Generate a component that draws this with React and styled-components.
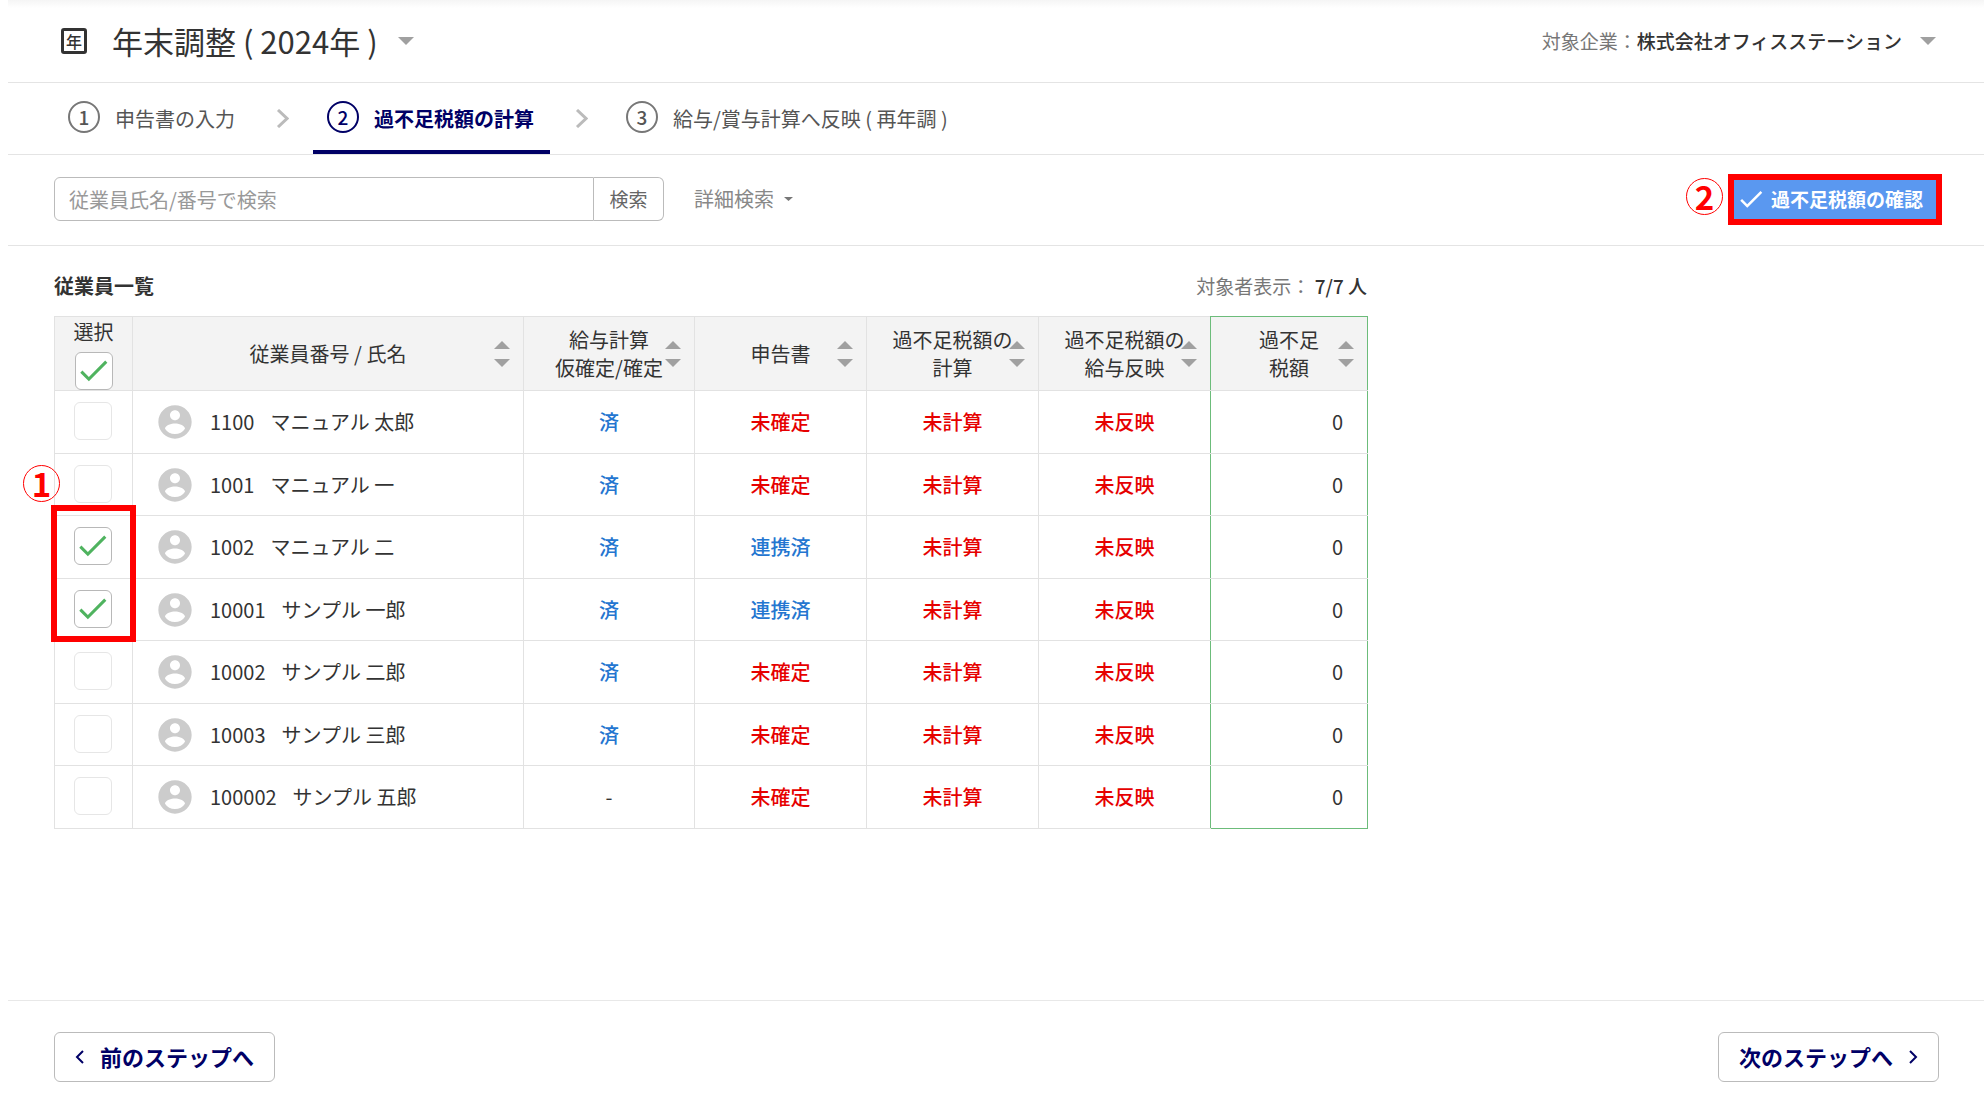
import React, { useState } from "react";
import styled, { createGlobalStyle } from "styled-components";

const GlobalStyle = createGlobalStyle`
  * { box-sizing: border-box; }
  body {
    margin: 0;
    background: #fff;
    color: #333;
    font-family: "Noto Sans CJK JP", "Noto Sans", sans-serif;
    font-size: 20px;
    line-height: 28px;
  }
  button, input { font: inherit; color: inherit; }
`;

const Page = styled.div`
  display: flex;
  flex-direction: column;
  min-height: 100vh;
  padding-left: 8px;
`;

const Header = styled.header`
  display: flex;
  align-items: center;
  justify-content: space-between;
  height: 83px;
  padding: 0 42px 0 46px;
  border-bottom: 1px solid #e4e4e4;
  background: linear-gradient(#f5f5f5, #fff 8px);
`;

const PlainButton = styled.button`
  display: flex;
  align-items: center;
  padding: 0;
  border: 0;
  background: none;
  cursor: pointer;
`;

const TitleGroup = styled.div`
  display: flex;
  align-items: center;
  padding-left: 7px;
  gap: 25px;
`;

const YearIcon = styled.span`
  display: flex;
  align-items: center;
  justify-content: center;
  width: 26px;
  height: 26px;
  border: 3px solid #333;
  border-radius: 3px;
  font-size: 16px;
  font-weight: 500;
  line-height: 20px;
`;

const Title = styled.h1`
  margin: 0;
  font-size: 31px;
  font-weight: 400;
  line-height: 44px;
`;

const TitleButton = styled(PlainButton)`
  gap: 20px;
`;

const CompanyButton = styled(PlainButton)`
  gap: 18px;
  padding-right: 6px;
  font-size: 19px;
`;

const Muted = styled.span`
  color: #777;
`;

const Medium = styled.span`
  font-weight: 500;
`;

const Steps = styled.nav`
  display: flex;
  align-items: stretch;
  height: 72px;
  padding-left: 46px;
  border-bottom: 1px solid #e4e4e4;
`;

const Step = styled(PlainButton)`
  gap: 15px;
  padding: 4px 16px 0 14px;
  border-bottom: 4px solid ${(p) => (p.$active ? "#000066" : "transparent")};
  color: ${(p) => (p.$active ? "#000066" : "#555")};
  font-weight: ${(p) => (p.$active ? 700 : 400)};
`;

const StepNumber = styled.span`
  display: flex;
  align-items: center;
  justify-content: center;
  width: 32px;
  height: 32px;
  margin-bottom: 4px;
  border: 2px solid ${(p) => (p.$active ? "#000066" : "#777")};
  border-radius: 50%;
  font-size: 19px;
  font-weight: 500;
`;

const StepGap = styled.span`
  display: flex;
  align-items: center;
  justify-content: center;
  width: 62px;
`;

const SearchBar = styled.div`
  display: flex;
  align-items: center;
  justify-content: space-between;
  height: 91px;
  padding: 0 42px 2px 46px;
  border-bottom: 1px solid #e4e4e4;
`;

const SearchForm = styled.form`
  display: flex;
  align-items: center;
`;

const SearchInput = styled.input`
  width: 540px;
  height: 44px;
  padding: 0 14px;
  border: 1px solid #bbb;
  border-radius: 6px 0 0 6px;
  &::placeholder { color: #999; opacity: 1; }
`;

const SearchButton = styled.button`
  width: 70px;
  height: 44px;
  padding: 0;
  border: 1px solid #bbb;
  border-left: 0;
  border-radius: 0 6px 6px 0;
  background: #fff;
  color: #666;
  font-size: 19px;
`;

const DetailButton = styled(PlainButton)`
  gap: 10px;
  margin-left: 30px;
  color: #888;
`;

const Confirm = styled.div`
  display: flex;
  align-items: center;
  gap: 5px;
`;

const Badge = styled.span`
  display: flex;
  align-items: center;
  justify-content: center;
  width: 37px;
  height: 37px;
  margin-bottom: 5px;
  border: 1px solid #f00;
  border-radius: 50%;
  color: #f00;
  font-size: 33px;
  font-weight: 700;
  line-height: 33px;
`;

const ConfirmButton = styled.button`
  display: flex;
  align-items: center;
  gap: 5px;
  height: 51px;
  padding: 0 13px 0 2px;
  border: 6px solid #f00;
  background: #5a98f0;
  color: #fff;
  font-size: 19px;
  font-weight: 700;
  white-space: nowrap;
`;

const Main = styled.main`
  flex: 1;
  padding: 26px 46px;
`;

const ListHeading = styled.div`
  display: flex;
  align-items: center;
  justify-content: space-between;
  width: 1313px;
  padding-bottom: 16px;
`;

const Heading = styled.h2`
  margin: 0;
  font-size: 20px;
  font-weight: 700;
`;

const Count = styled.div`
  font-size: 19px;
`;

const Table = styled.table`
  width: 1313px;
  table-layout: fixed;
  border-collapse: collapse;
`;

const Col = styled.col`
  width: ${(p) => p.$w}px;
`;

const GREEN_LINE = "#6cbc7a";

const HeadCell = styled.th`
  position: relative;
  height: 74px;
  padding: 0;
  border: 1px solid #e2e2e2;
  background: #f3f3f3;
  font-weight: 400;
  text-align: center;
  white-space: pre-line;
  &:nth-last-child(2) { border-right-color: ${GREEN_LINE}; }
  &:last-child {
    border-top-color: ${GREEN_LINE};
    border-left-color: ${GREEN_LINE};
    border-right-color: ${GREEN_LINE};
  }
`;

const SelectLabel = styled.label`
  display: flex;
  flex-direction: column;
  align-items: center;
  gap: 6px;
`;

const Sorter = styled.button`
  position: absolute;
  top: 0;
  bottom: 0;
  right: 13px;
  display: flex;
  align-items: center;
  padding: 0;
  border: 0;
  background: none;
`;

const Row = styled.tr`
  height: 63px;
  &:nth-child(even) { height: 62px; }
`;

const Cell = styled.td`
  position: relative;
  padding: 0;
  border: 1px solid #e2e2e2;
  text-align: center;
  color: ${(p) => p.$color || "#333"};
  font-weight: ${(p) => (p.$color ? 500 : 400)};
  &:nth-last-child(2) { border-right-color: ${GREEN_LINE}; }
`;

const AmountCell = styled(Cell)`
  padding-right: 24px;
  border-left-color: ${GREEN_LINE};
  border-right-color: ${GREEN_LINE};
  text-align: right;
  ${Row}:last-child & { border-bottom-color: ${GREEN_LINE}; }
`;

const Person = styled.div`
  display: flex;
  align-items: center;
  padding-left: 22px;
`;

const Code = styled.span`
  padding: 0 16px 0 15px;
`;

const CheckWrap = styled.span`
  position: relative;
  display: flex;
  width: 38px;
  height: 38px;
  svg {
    position: absolute;
    top: 0;
    left: 0;
    pointer-events: none;
  }
`;

const CheckCell = styled(Cell)`
  padding: 0 0 2px 19px;
`;

const CheckInput = styled.input`
  appearance: none;
  width: 38px;
  height: 38px;
  margin: 0;
  border: 1px solid #e6e6e6;
  border-radius: 6px;
  background: #fff;
  &:checked { border-color: #b8b8b8; }
`;

const Highlight = styled.div`
  position: absolute;
  z-index: 1;
  top: -11px;
  left: -4px;
  width: 85px;
  height: 137px;
  border: 6px solid #f00;
  pointer-events: none;
`;

const HighlightBadge = styled(Badge)`
  position: absolute;
  right: 70px;
  bottom: 129px;
`;

const Footer = styled.footer`
  display: flex;
  justify-content: space-between;
  padding: 31px 45px 25px 46px;
  border-top: 1px solid #e8e8e8;
`;

const StepButton = styled.button`
  display: flex;
  align-items: center;
  justify-content: center;
  gap: 15px;
  width: 221px;
  height: 50px;
  padding: 0 0 2px;
  border: 1px solid #bbb;
  border-radius: 6px;
  background: #fff;
  color: #000066;
  font-size: 22px;
  font-weight: 700;
  svg { margin-top: 2px; }
`;

const Triangle = ({ w = 16, h = 8, color = "#a0a0a0" }) => (
  <svg width={w} height={h} viewBox="0 0 16 8" preserveAspectRatio="none" fill={color} aria-hidden="true">
    <path d="M0 0h16L8 8z" />
  </svg>
);

const SortIcon = () => (
  <svg width="16" height="26" viewBox="0 0 16 26" fill="#a0a0a0" aria-hidden="true">
    <path d="M0 8h16L8 0zM0 18h16L8 26z" />
  </svg>
);

const CheckIcon = ({ size, color }) => (
  <svg width={size} height={size} viewBox="0 0 24 24" fill={color} aria-hidden="true">
    <path d="M9 16.17L4.83 12l-1.42 1.41L9 19 21 7l-1.41-1.41z" />
  </svg>
);

const Chevron = ({ w, h, color, left, stroke }) => (
  <svg width={w} height={h} viewBox={`0 0 ${w} ${h}`} fill="none" stroke={color} strokeWidth={stroke} aria-hidden="true">
    {left ? (
      <path d={`M${w - 2} 1L2 ${h / 2}L${w - 2} ${h - 1}`} />
    ) : (
      <path d={`M2 1L${w - 2} ${h / 2}L2 ${h - 1}`} />
    )}
  </svg>
);

const Avatar = () => (
  <svg width="40" height="40" viewBox="0 0 24 24" fill="#ccc" aria-hidden="true">
    <path d="M12 2C6.48 2 2 6.48 2 12s4.48 10 10 10 10-4.48 10-10S17.52 2 12 2zm0 3c1.66 0 3 1.34 3 3s-1.34 3-3 3-3-1.34-3-3 1.34-3 3-3zm0 14.2c-2.5 0-4.71-1.28-6-3.22.03-1.99 4-3.08 6-3.08 1.99 0 5.97 1.09 6 3.08-1.29 1.94-3.5 3.22-6 3.22z" />
  </svg>
);

const Check = ({ checked, onChange, id, label }) => (
  <CheckWrap>
    <CheckInput type="checkbox" id={id} checked={checked} onChange={onChange} aria-label={label} />
    {checked && <CheckIcon size={37} color="#4fb35f" />}
  </CheckWrap>
);

const BLUE = "#2476d0";
const RED = "#e60000";

const steps = ["申告書の入力", "過不足税額の計算", "給与/賞与計算へ反映 ( 再年調 )"];

const columns = [
  "従業員番号 / 氏名",
  "給与計算\n仮確定/確定",
  "申告書",
  "過不足税額の\n計算",
  "過不足税額の\n給与反映",
  "過不足\n税額",
];

const employees = [
  { code: "1100", name: "マニュアル 太郎", payroll: "済", report: "未確定" },
  { code: "1001", name: "マニュアル 一", payroll: "済", report: "未確定" },
  { code: "1002", name: "マニュアル 二", payroll: "済", report: "連携済" },
  { code: "10001", name: "サンプル 一郎", payroll: "済", report: "連携済" },
  { code: "10002", name: "サンプル 二郎", payroll: "済", report: "未確定" },
  { code: "10003", name: "サンプル 三郎", payroll: "済", report: "未確定" },
  { code: "100002", name: "サンプル 五郎", payroll: "-", report: "未確定" },
];

export default function App() {
  const [selected, setSelected] = useState(["1002", "10001"]);
  const [all, setAll] = useState(true);
  const toggle = (code) =>
    setSelected((s) => (s.includes(code) ? s.filter((c) => c !== code) : [...s, code]));

  return (
    <Page>
      <GlobalStyle />
      <Header>
        <TitleGroup>
          <YearIcon>年</YearIcon>
          <TitleButton type="button">
            <Title>年末調整 ( 2024年 )</Title>
            <Triangle />
          </TitleButton>
        </TitleGroup>
        <CompanyButton type="button">
          <span>
            <Muted>対象企業：</Muted>
            <Medium>株式会社オフィスステーション</Medium>
          </span>
          <Triangle />
        </CompanyButton>
      </Header>

      <Steps>
        {steps.map((label, i) => (
          <React.Fragment key={label}>
            {i > 0 && (
              <StepGap>
                <Chevron w={13} h={19} color="#bbb" stroke={3} />
              </StepGap>
            )}
            <Step type="button" $active={i === 1}>
              <StepNumber $active={i === 1}>{i + 1}</StepNumber>
              {label}
            </Step>
          </React.Fragment>
        ))}
      </Steps>

      <SearchBar>
        <SearchForm onSubmit={(e) => e.preventDefault()}>
          <SearchInput type="text" placeholder="従業員氏名/番号で検索" aria-label="従業員氏名/番号で検索" />
          <SearchButton type="submit">検索</SearchButton>
          <DetailButton type="button">
            詳細検索
            <Triangle w={9} h={4} color="#777" />
          </DetailButton>
        </SearchForm>
        <Confirm>
          <Badge>2</Badge>
          <ConfirmButton type="button">
            <CheckIcon size={30} color="#fff" />
            過不足税額の確認
          </ConfirmButton>
        </Confirm>
      </SearchBar>

      <Main>
        <ListHeading>
          <Heading>従業員一覧</Heading>
          <Count>
            <Muted>対象者表示：</Muted> <Medium>7/7 人</Medium>
          </Count>
        </ListHeading>
        <Table>
          <colgroup>
            <Col $w={78} />
            <Col $w={391} />
            <Col $w={171} />
            <Col $w={172} />
            <Col $w={172} />
            <Col $w={172} />
            <Col $w={157} />
          </colgroup>
          <thead>
            <tr>
              <HeadCell>
                <SelectLabel htmlFor="select-all">
                  選択
                  <Check id="select-all" checked={all} onChange={() => setAll(!all)} />
                </SelectLabel>
              </HeadCell>
              {columns.map((c) => (
                <HeadCell key={c}>
                  {c}
                  <Sorter type="button" aria-label="並べ替え">
                    <SortIcon />
                  </Sorter>
                </HeadCell>
              ))}
            </tr>
          </thead>
          <tbody>
            {employees.map((e) => (
              <Row key={e.code}>
                <CheckCell>
                  <Check label={e.name} checked={selected.includes(e.code)} onChange={() => toggle(e.code)} />
                  {e.code === "1002" && (
                    <Highlight>
                      <HighlightBadge>1</HighlightBadge>
                    </Highlight>
                  )}
                </CheckCell>
                <Cell>
                  <Person>
                    <Avatar />
                    <Code>{e.code}</Code>
                    {e.name}
                  </Person>
                </Cell>
                <Cell $color={e.payroll === "済" ? BLUE : undefined}>{e.payroll}</Cell>
                <Cell $color={e.report === "連携済" ? BLUE : RED}>{e.report}</Cell>
                <Cell $color={RED}>未計算</Cell>
                <Cell $color={RED}>未反映</Cell>
                <AmountCell>0</AmountCell>
              </Row>
            ))}
          </tbody>
        </Table>
      </Main>

      <Footer>
        <StepButton type="button">
          <Chevron w={10} h={14} color="#000066" stroke={2} left />
          前のステップへ
        </StepButton>
        <StepButton type="button">
          次のステップへ
          <Chevron w={10} h={14} color="#000066" stroke={2} />
        </StepButton>
      </Footer>
    </Page>
  );
}
